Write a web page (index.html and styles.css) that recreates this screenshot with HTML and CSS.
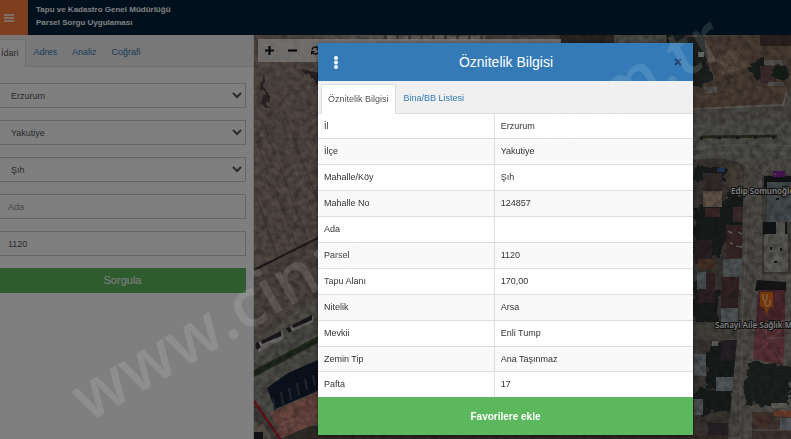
FILE: index.html
```html
<!DOCTYPE html>
<html lang="tr">
<head>
<meta charset="utf-8">
<meta name="viewport" content="width=device-width, initial-scale=1">
<title>Parsel Sorgu Uygulaması</title>
<link rel="stylesheet" href="styles.css">
</head>
<body>
<div class="app">
  <header class="topbar">
    <button class="menu-button" type="button" aria-label="Menü">
      <svg width="10" height="8" viewBox="0 0 10 8"><path d="M0 1h10M0 4h10M0 7h10" stroke="currentColor" stroke-width="1.5"/></svg>
    </button>
    <div class="brand"><div>Tapu ve Kadastro Genel Müdürlüğü</div><div>Parsel Sorgu Uygulaması</div></div>
  </header>
  <div class="workspace">
    <aside class="sidebar">
      <nav class="tabs side-tabs">
        <a class="tab active" href="#idari">İdari</a>
        <a class="tab" href="#adres">Adres</a>
        <a class="tab" href="#analiz">Analiz</a>
        <a class="tab" href="#cografi">Coğrafi</a>
      </nav>
      <form class="query">
        <select class="field" aria-label="İl"><option>Erzurum</option></select>
        <select class="field" aria-label="İlçe"><option>Yakutiye</option></select>
        <select class="field" aria-label="Mahalle"><option>Şıh</option></select>
        <input class="field" type="text" placeholder="Ada" aria-label="Ada">
        <input class="field" type="text" value="1120" aria-label="Parsel">
        <button class="submit" type="button">Sorgula</button>
      </form>
    </aside>
    <main class="map">
      <svg class="imagery" viewBox="254 35 537 404" preserveAspectRatio="xMinYMin slice" aria-hidden="true">
        <defs>
          <filter id="grain" x="0" y="0" width="100%" height="100%" color-interpolation-filters="sRGB">
            <feTurbulence type="fractalNoise" baseFrequency="0.16" numOctaves="3" seed="7"/>
            <feColorMatrix values="0 0 0 0 .1  0 0 0 0 .08  0 0 0 0 .08  1.6 0 0 0 -0.5"/>
          </filter>
          <filter id="rough" x="-5%" y="-5%" width="110%" height="110%" color-interpolation-filters="sRGB">
            <feTurbulence type="fractalNoise" baseFrequency="0.12" numOctaves="2" seed="3"/>
            <feDisplacementMap in="SourceGraphic" scale="12" xChannelSelector="R" yChannelSelector="G"/>
          </filter>
          <filter id="soft"><feGaussianBlur stdDeviation="0.5"/></filter>
        </defs>
        <g filter="url(#soft)">
        <rect x="254" y="35" width="537" height="404" fill="#9c9a90"/>
        <!-- bare field on the west side -->
        <path d="M254 35h70v200l-70 36z" fill="#a08e83"/>
        <g stroke="#b3a297" stroke-width="2" opacity=".4" fill="none"><path d="M258 125l50 125M272 110l48 122M286 98l34 88M254 150l38 108"/></g>
        <g stroke="#75665e" stroke-width="1.5" opacity=".5"><path d="M262 120l48 126M280 102l42 110M254 135l46 120M254 190l25 72"/></g>
        <g filter="url(#rough)"><path d="M261 73l6 19 2 22-5-10z" fill="#554a4b"/><path d="M267 110l8 5-3 16-7-2z" fill="#8c857d"/><path d="M304 69l16 2v18l-10-14z" fill="#4a4143"/></g>
        <path d="M254 272l66-34v58l-66 44z" fill="#96897f"/>
        <path d="M254 270l66-33" stroke="#3b3131" stroke-width="2"/>
        <path d="M254 345l66-38v132h-66z" fill="#97968c"/>
        <g fill="#d6d4d2"><path d="M255 344l28-14 1 8-25 14zM289 327l24-12 1 7-23 10z"/></g>
        <g fill="#302d32"><path d="M261 341l20-10v5l-19 8zM292 325l20-10v5l-19 8zM255 344l3-2 3 5-4 3zM286 328l4-1 2 4-3 2z"/></g>
        <path d="M254 370l66-35v7l-66 35z" fill="#405234"/>
        <path d="M254 373l66-34" stroke="#242b23" stroke-width="1" stroke-dasharray="7 5"/>
        <path d="M267 388l21-15 32-14v31l-45 19z" fill="#19233b"/>
        <path d="M273 398l2 13M281 392l2 13M289 388l2 12M297 383l2 12M305 379l2 11M313 375l2 11" stroke="#45506a" stroke-width="2"/>
        <path d="M270 413l50-22v31l-38 17z" fill="#d08a7e"/>
        <path d="M279 425l22-9M284 429l25-10" stroke="#e2a59a" stroke-width="2" stroke-dasharray="4 2"/>
        <path d="M254 402l26 37h-26z" fill="#77736f"/><path d="M254 401l27 39" stroke="#d31f2b" stroke-width="2.2"/>
        <path d="M254 421l10 4 8 14h-18z" fill="#aaa28e"/><path d="M254 432h9v7h-9z" fill="#20252f"/>
        <path d="M280 439l30-13 8 0v13z" fill="#5d554e"/>
        <!-- strip under the header -->
        <path d="M315 35h60v8h-60z" fill="#a7a199"/><path d="M375 35h230v10h-230z" fill="#857b70"/><path d="M375 38h110" stroke="#c5bfb5" stroke-width="5" stroke-dasharray="9 3"/>
        <path d="M560 35h54v10h-54z" fill="#574744"/><path d="M614 35h52v10h-52z" fill="#989990"/>
        <!-- east side: dirt plots and main road -->
        <path d="M666 35h125v78l-98 5-27-75z" fill="#917866"/>
        <path d="M715 60l18-12 18 18-28 9z" fill="#ad927b"/>
        <path d="M666 35h36l10 45-19 8-25-30z" fill="#34403a" filter="url(#rough)"/>
        <path d="M698 52h6v5h-6z" fill="#d8d8d8"/><path d="M704 87h13v6h-13z" fill="#aaa69f"/>
        <path d="M760 35h31v11h-31z" fill="#594540"/>
        <path d="M749 62l13-4 8 20-16 5z" fill="#2f3c35" filter="url(#rough)"/>
        <path d="M760 66h16v17h-15z" fill="#765656"/><path d="M764 60h19v5h-19zM768 82h16v4h-16z" fill="#aaa6a3"/>
        <circle cx="780" cy="73" r="8" fill="#293b30" filter="url(#rough)"/>
        <path d="M693 109l94-5v-12l4-2v35l-98 5z" fill="#929086"/><path d="M693 109l90-4 4-13" stroke="#b7b3a9" stroke-width="2" fill="none"/>
        <path d="M693 121h98v40h-98z" fill="#989790"/>
        <path d="M701 137l76-1" stroke="#4a5039" stroke-width="3"/><path d="M700 138l84-1" stroke="#2c342a" stroke-width="3" stroke-dasharray="3 15"/>
        <path d="M693 150q30-8 98-4M693 157q35-7 98-3" stroke="#a6a69d" stroke-width="2" fill="none"/>
        <!-- housing blocks -->
        <path d="M693 160q50-6 57 14l-2 110-5 155h-50z" fill="#6f6b64"/>
        <path d="M720 168q17-12 23 4l3 36-22-25z" fill="#897e6d"/>
        <g fill="#2f3935" filter="url(#rough)"><path d="M695 166l30 2v13h-30zM694 208l28-3 8-12 18 3-4 46-50-1zM694 239h26v18h-26zM694 282l24 8v32h-24zM706 353l20-14 12 1-3 46-29 1zM698 386l36 6-3 18-38 5z"/></g>
        <path d="M703 173h19v18h-19z" fill="#6a5659"/><path d="M703 191h19v16h-19z" fill="#bda58e"/><path d="M705 208h15v9h-15z" fill="#72504a"/>
        <path d="M717 168h8v4h-8z" fill="#4b67a6"/>
        <path d="M733 207h15v15h-15z" fill="#735558"/><path d="M726 225h20v33h-20z" fill="#6e4c4d"/><path d="M728 231l4 2M738 232l4 2M730 243l3 1M736 246l6 1" stroke="#d8d4d4" stroke-width="1.5"/>
        <path d="M723 259h20v31h-20z" fill="#9ca5a7"/><path d="M722 277h17v19h-17z" fill="#674447"/>
        <path d="M695 240h17v24h-17z" fill="#504047"/><path d="M698 259h17v10h-17z" fill="#8a604e"/><path d="M697 272h9v18h-9z" fill="#97a7ab"/><path d="M706 273h9v22h-9z" fill="#5e454a"/>
        <path d="M698 289h17v14h-17z" fill="#583f47"/><path d="M721 308h17v14h-17z" fill="#9ea8ac"/><path d="M721 290h17v18h-17z" fill="#5f454a"/>
        <path d="M693 322h52v18h-52z" fill="#858177"/><path d="M721 341h16v20h-16z" fill="#4a4148"/><path d="M712 341h6v5h-6z" fill="#d4d1cc"/>
        <path d="M694 354h12v22h-12zM694 399h9v16h-9z" fill="#9aa5ab"/><path d="M716 377h18v14h-18z" fill="#a2b0b6"/><path d="M708 423h20v16h-20z" fill="#4e4349"/>
        <path d="M744 170l14-12h17l-18 20-4 120-10 141h-15l13-145z" fill="#96928a"/>
        <path d="M748 208q-6 90-8 231" stroke="#b2afa5" stroke-width="1" fill="none"/>
        <path d="M762 174h29v100h-29z" fill="#7b7971"/><path d="M764 176h27v13h-27zM763 222h24v13h-24z" fill="#24272c"/>
        <path d="M767 182h24v40h-24z" fill="#8a999d"/><path d="M764 234h24v38h-24z" fill="#aeada6"/><path d="M776 222h9v12h-9z" fill="#b4b4ae"/><path d="M764 272l12-20 12 20" fill="#b9b8b2"/>
        <path d="M776 198h3v2h-3zM770 247h2v3h-2zM780 248h2v3h-2zM774 261h3v2h-3z" fill="#292b32"/>
        <path d="M773 171h12v6h-12z" fill="#962aac"/><path d="M762 174h14M760 175v41M755 277h36" stroke="#b7b0a3" stroke-width="1" fill="none"/>
        <path d="M757 280l29 2v10l-31-1z" fill="#2c2a2e"/>
        <path d="M758 290h27v33h-29z" fill="#97505a"/><path d="M755 323h31l-3 42-30-6z" fill="#b0606a"/><path d="M770 341l15-15M770 341l-17 17M770 341l13 22" stroke="#c48086" stroke-width="1"/>
        <path d="M766 321h19v17h-19z" fill="none" stroke="#c7a0a0" stroke-width="1"/>
        <path d="M748 361l43 5v40l-47-2z" fill="#35413a" filter="url(#rough)"/>
        <path d="M752 412h39v27h-39z" fill="#7d6a62"/><path d="M754 414h16v13h-16z" fill="#8a6254"/><path d="M774 410l17 1v6l-17-1z" fill="#d8795a"/>
        <path d="M780 418h11v12h-11z" fill="#a8b1ba"/><path d="M771 403h16v5h-16z" fill="#c8c2ba"/><path d="M752 430h39" stroke="#b1a598" stroke-width="1"/>
        <path d="M298 435h430v4H298z" fill="#655850"/>
        </g>
        <rect x="254" y="35" width="537" height="404" filter="url(#grain)" opacity=".45"/>
        <!-- place markers -->
        <path d="M760 292h13v14l-4 2-2 6-3-6-4-2z" fill="#e9700f"/>
        <path d="M763 294v4q0 3 2 3t2-3v-4M765 301v3q0 2 3 2t2-4v-2" fill="none" stroke="#ffe1bd" stroke-width="1"/>
        <g class="places"><text x="731" y="194">Edip Somunoğlu</text><text x="715" y="328">Sanayi Aile Sağlık M</text></g>
      </svg>
      <div class="toolbar">
        <button type="button" aria-label="Yakınlaştır"><svg width="9" height="9" viewBox="0 0 9 9"><path d="M4.500 0v9M0 4.500h9" stroke="currentColor" stroke-width="2.200"/></svg></button>
        <button type="button" aria-label="Uzaklaştır"><svg width="9" height="9" viewBox="0 0 9 9"><path d="M0 4.500h9" stroke="currentColor" stroke-width="2.200"/></svg></button>
        <button type="button" aria-label="Yenile"><svg width="9" height="9" viewBox="0 0 9 9"><path d="M1 4a3.500 3.500 0 0 1 6-2M8 5a3.500 3.500 0 0 1-6 2" fill="none" stroke="currentColor" stroke-width="1.500"/><path d="M9 0v4H5zM0 9V5h4z" fill="currentColor"/></svg></button>
      </div>
    </main>
  </div>
</div>
<div class="backdrop">
  <section class="modal" role="dialog" aria-labelledby="dialog-title">
    <header class="modal-head">
      <button type="button" aria-label="Seçenekler"><svg width="4" height="13" viewBox="0 0 4 13"><g fill="#fff"><circle cx="2" cy="2" r="2"/><circle cx="2" cy="6.500" r="2"/><circle cx="2" cy="11" r="2"/></g></svg></button>
      <h1 id="dialog-title">Öznitelik Bilgisi</h1>
      <button type="button" aria-label="Kapat"><svg width="8" height="8" viewBox="0 0 8 8"><path d="M1 1l6 6M7 1L1 7" stroke="#1d476e" stroke-width="2"/></svg></button>
    </header>
    <nav class="tabs modal-tabs">
      <a class="tab active" href="#bilgi">Öznitelik Bilgisi</a>
      <a class="tab" href="#liste">Bina/BB Listesi</a>
    </nav>
    <div class="table-area">
      <table>
        <tbody>
          <tr><th scope="row">İl</th><td>Erzurum</td></tr>
          <tr><th scope="row">İlçe</th><td>Yakutiye</td></tr>
          <tr><th scope="row">Mahalle/Köy</th><td>Şıh</td></tr>
          <tr><th scope="row">Mahalle No</th><td>124857</td></tr>
          <tr><th scope="row">Ada</th><td></td></tr>
          <tr><th scope="row">Parsel</th><td>1120</td></tr>
          <tr><th scope="row">Tapu Alanı</th><td>170,00</td></tr>
          <tr><th scope="row">Nitelik</th><td>Arsa</td></tr>
          <tr><th scope="row">Mevkii</th><td>Enli Tump</td></tr>
          <tr><th scope="row">Zemin Tip</th><td>Ana Taşınmaz</td></tr>
          <tr><th scope="row">Pafta</th><td>17</td></tr>
        </tbody>
      </table>
    </div>
    <button class="favorite" type="button">Favorilere ekle</button>
  </section>
</div>
<svg class="watermark" viewBox="0 0 791 439" preserveAspectRatio="xMinYMin slice" aria-hidden="true">
  <g transform="translate(88 423) rotate(-30)"><text x="0" y="0">www.cinar</text><text x="741" y="0" text-anchor="end">.com.tr</text></g>
</svg>
</body>
</html>
```
FILE: styles.css
```css
* {
  box-sizing: border-box;
}

body {
  margin: 0;
  overflow: hidden;
  color: #333;
  font: 9px/13px "Liberation Sans", Arial, sans-serif;
}

button,
input,
select {
  margin: 0;
  color: inherit;
  font: inherit;
}

button {
  display: grid;
  place-items: center;
  padding: 0;
  border: 0;
  background: none;
}

a {
  color: #337ab7;
  text-decoration: none;
}

.app {
  display: flex;
  flex-direction: column;
  height: 100vh;
}

.topbar {
  display: flex;
  flex: 0 0 35px;
  background: #002038;
}

.menu-button {
  width: 28px;
  padding-right: 10px;
  background: #ff7d3c;
  color: #fff;
}

.brand {
  padding: 3px 8px;
  color: #fff;
  font-size: 8px;
  font-weight: bold;
}

.workspace {
  display: flex;
  flex: 1;
  min-height: 0;
}

.sidebar {
  flex: 0 0 254px;
  overflow: hidden;
  border-right: 1px solid #ddd;
  background: #fff;
}

.tabs {
  display: flex;
  align-items: flex-end;
  gap: 1px;
  border-bottom: 1px solid #ddd;
  background: #f0f0f0;
}

.tab {
  padding: 7px 6px;
  border: 1px solid transparent;
  border-bottom: 0;
}

.tab.active {
  margin-bottom: -1px;
  border-color: #ddd;
  background: #fff;
  color: #555;
}

.side-tabs {
  height: 32px;
}

.side-tabs .active {
  margin-left: -6px;
}

.query {
  display: grid;
  gap: 12px;
  margin: 16px 7px 0 -1px;
}

.field {
  width: 100%;
  height: 25px;
  padding: 0 8px;
  border: 1px solid #ccc;
  border-radius: 0;
  background: #fff;
  color: #555;
}

select.field {
  padding: 0 3px 0 7px;
}

.field::placeholder {
  color: #888;
}

.submit {
  height: 25px;
  background: #5cb85c;
  color: #fff;
  font-size: 11px;
}

.map {
  position: relative;
  flex: 1;
  overflow: hidden;
}

.imagery {
  display: block;
  width: 100%;
  height: 100%;
}

.places {
  fill: #fff;
  stroke: #222;
  stroke-width: 2px;
  paint-order: stroke;
  font: 600 8px "Noto Sans", sans-serif;
}

.toolbar {
  position: absolute;
  top: 4px;
  left: 4px;
  display: flex;
  width: 303px;
  height: 23px;
  background: rgba(255, 255, 255, .7);
  color: #111;
}

.toolbar button {
  width: 23px;
}

.backdrop {
  position: fixed;
  inset: 0;
  display: flex;
  padding: 43px 98px 4px 318px;
  background: rgba(0, 0, 0, .5);
}

.modal {
  display: flex;
  flex: 1;
  flex-direction: column;
  background: #fff;
  box-shadow: 0 1px 4px rgba(0, 0, 0, .5);
}

.modal-head {
  display: flex;
  flex: 0 0 38px;
  align-items: center;
  justify-content: space-between;
  padding: 0 11px 0 16px;
  background: #337ab7;
  color: #fff;
}

.modal-head h1 {
  margin: 0;
  font-size: 14px;
  font-weight: normal;
}

.modal-tabs {
  flex: 0 0 33px;
  padding-left: 3px;
}

.modal-tabs .tab {
  padding: 8px 6px;
}

.table-area {
  flex: 1;
  min-height: 0;
}

table {
  width: 100%;
  height: 100%;
  border-collapse: collapse;
  table-layout: fixed;
}

th,
td {
  padding: 0 6px;
  border-bottom: 1px solid #ddd;
  font-weight: normal;
  text-align: left;
}

th {
  width: 47%;
  border-right: 1px solid #ddd;
}

tr:nth-child(even) {
  background: #f9f9f9;
}

tr:last-child > * {
  border-bottom: 0;
}

.favorite {
  flex: 0 0 38px;
  background: #5cb85c;
  color: #fff;
  font-size: 10px;
  font-weight: bold;
}

.watermark {
  position: fixed;
  inset: 0;
  width: 100%;
  height: 100%;
  pointer-events: none;
  fill: rgba(255, 255, 255, .12);
  font: 600 66px "Open Sans", sans-serif;
}
```
